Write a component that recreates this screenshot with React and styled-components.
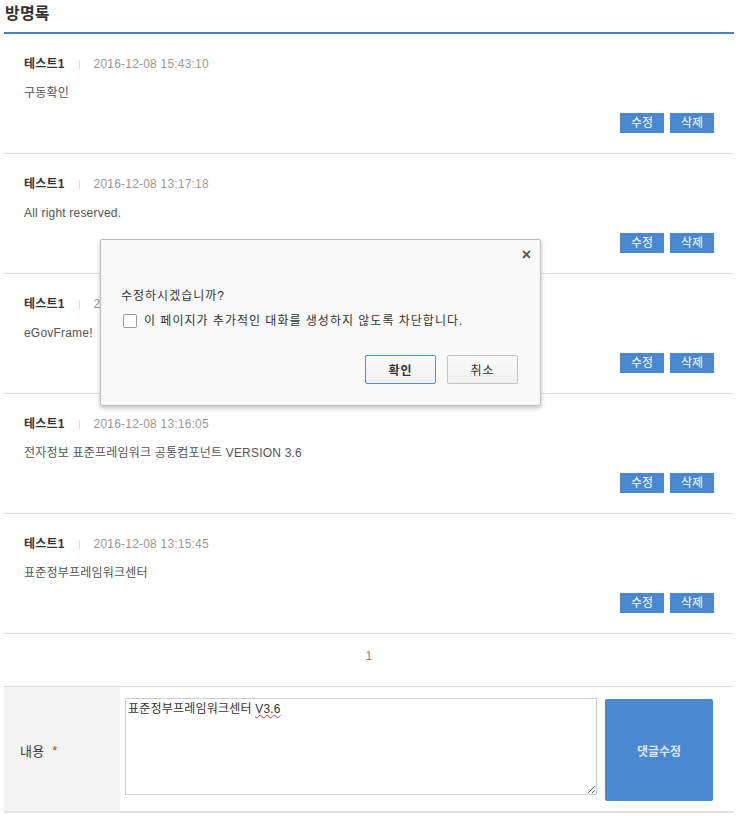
import React from 'react';
import styled, { createGlobalStyle } from 'styled-components';

const entries = [
  { name: '테스트1', date: '2016-12-08 15:43:10', text: '구동확인' },
  { name: '테스트1', date: '2016-12-08 13:17:18', text: 'All right reserved.' },
  { name: '테스트1', date: '2016-12-08 13:16:40', text: 'eGovFrame!' },
  { name: '테스트1', date: '2016-12-08 13:16:05', text: '전자정보 표준프레임워크 공통컴포넌트 VERSION 3.6' },
  { name: '테스트1', date: '2016-12-08 13:15:45', text: '표준정부프레임워크센터' },
];

const GlobalStyle = createGlobalStyle`
  body {
    margin: 0;
    background: #fff;
    font-family: "Liberation Sans", "Noto Sans CJK KR", sans-serif;
    font-size: 12px;
    letter-spacing: 0.2px;
    color: #333;
  }
`;

const Page = styled.div`
  position: relative;
  width: 730px;
  padding-left: 4px;
`;

const Title = styled.h2`
  margin: 0;
  height: 34px;
  padding: 4px 0 0 1px;
  box-sizing: border-box;
  font-size: 16px;
  line-height: 20px;
  font-weight: bold;
  color: #333;
  border-bottom: 2px solid #4a7fc1;
`;

const Item = styled.div`
  padding: 22px 20px 20px;
  border-bottom: 1px solid #ddd;
`;

const Meta = styled.div`
  display: flex;
  align-items: center;
  height: 16px;
  line-height: 16px;
`;

const Name = styled.span`
  font-weight: bold;
  color: #333;
`;

const Sep = styled.span`
  width: 1px;
  height: 9px;
  background: #ddd;
  margin: 0 14px 0 14px;
`;

const Date = styled.span`
  color: #999;
`;

const Content = styled.p`
  margin: 13px 0 0;
  line-height: 16px;
  color: #555;
`;

const Actions = styled.div`
  display: flex;
  justify-content: flex-end;
  gap: 6px;
  margin-top: 12px;
`;

const SmallButton = styled.button`
  width: 44px;
  height: 20px;
  padding: 0;
  border: 0;
  background: #4a88d0;
  color: #fff;
  font-family: inherit;
  font-size: 12px;
  line-height: 20px;
`;

const Paging = styled.div`
  height: 53px;
  padding-top: 14px;
  box-sizing: border-box;
  text-align: center;
  line-height: 16px;
  color: #888;
  border-bottom: 1px solid #ddd;
`;

const FormRow = styled.div`
  display: grid;
  grid-template-columns: 116px 1fr;
  height: 126px;
  border-bottom: 2px solid #e4e4e4;
  box-sizing: border-box;
`;

const Label = styled.div`
  display: flex;
  align-items: center;
  padding: 2px 0 0 16px;
  background: #f3f3f3;
  font-size: 13px;
  color: #333;
`;

const Required = styled.span`
  color: #c33;
  margin-left: 8px;
`;

const Field = styled.div`
  display: flex;
  align-items: flex-start;
  gap: 8px;
  padding: 11px 0 0 5px;
`;

const TextBox = styled.div`
  width: 472px;
  height: 97px;
  box-sizing: border-box;
  border: 1px solid #ccc;
  padding: 2px 2px;
  font-size: 12px;
  line-height: 16px;
  color: #333;
  resize: both;
  overflow: auto;
`;

const Misspelled = styled.span`
  text-decoration: underline wavy #d33;
  text-decoration-thickness: 1px;
`;

const SubmitButton = styled.button`
  width: 108px;
  height: 102px;
  margin-top: 1px;
  border: 0;
  border-radius: 2px;
  background: #4a88d0;
  color: #dbe7f5;
  font-family: inherit;
  font-size: 12px;
  font-weight: bold;
`;

const Dialog = styled.div`
  position: absolute;
  left: 100px;
  top: 239px;
  width: 441px;
  height: 167px;
  box-sizing: border-box;
  background: #f9f9f9;
  border: 1px solid #bdbdbd;
  border-radius: 2px;
  box-shadow: 0 2px 4px rgba(0, 0, 0, 0.25);
  padding: 48px 20px 0 20px;
  font-size: 12px;
  letter-spacing: 1px;
  color: #333;
`;

const Close = styled.span`
  position: absolute;
  right: 9px;
  top: 6px;
  font-size: 16px;
  font-weight: bold;
  letter-spacing: 0;
  color: #555;
`;

const Message = styled.p`
  margin: 0;
  line-height: 16px;
`;

const CheckRow = styled.label`
  display: flex;
  align-items: center;
  gap: 7px;
  height: 16px;
  margin-top: 9px;
  line-height: 16px;
`;

const Box = styled.span`
  width: 12px;
  height: 12px;
  border: 1px solid #999;
  border-radius: 2px;
  background: #fff;
  margin-left: 2px;
`;

const DialogActions = styled.div`
  display: flex;
  justify-content: flex-end;
  gap: 11px;
  margin-top: 26px;
  padding-right: 2px;
`;

const DialogButton = styled.button`
  width: 71px;
  height: 29px;
  box-sizing: border-box;
  border: 1px solid ${(p) => (p.$primary ? '#4d90d8' : '#c4c4c4')};
  border-radius: 2px;
  background: linear-gradient(#fbfbfb, #f0f0f0);
  color: #333;
  font-family: inherit;
  font-size: 12px;
  letter-spacing: 1px;
  font-weight: ${(p) => (p.$primary ? 'bold' : 'normal')};
`;

const App = () => (
  <Page>
    <GlobalStyle />
    <Title>방명록</Title>
    {entries.map((e) => (
      <Item key={e.date}>
        <Meta>
          <Name>{e.name}</Name>
          <Sep />
          <Date>{e.date}</Date>
        </Meta>
        <Content>{e.text}</Content>
        <Actions>
          <SmallButton>수정</SmallButton>
          <SmallButton>삭제</SmallButton>
        </Actions>
      </Item>
    ))}
    <Paging>1</Paging>
    <FormRow>
      <Label>
        내용
        <Required>*</Required>
      </Label>
      <Field>
        <TextBox>
          표준정부프레임워크센터 <Misspelled>V3.6</Misspelled>
        </TextBox>
        <SubmitButton>댓글수정</SubmitButton>
      </Field>
    </FormRow>
    <Dialog>
      <Close>×</Close>
      <Message>수정하시겠습니까?</Message>
      <CheckRow>
        <Box />
        이 페이지가 추가적인 대화를 생성하지 않도록 차단합니다.
      </CheckRow>
      <DialogActions>
        <DialogButton $primary>확인</DialogButton>
        <DialogButton>취소</DialogButton>
      </DialogActions>
    </Dialog>
  </Page>
);

export default App;
